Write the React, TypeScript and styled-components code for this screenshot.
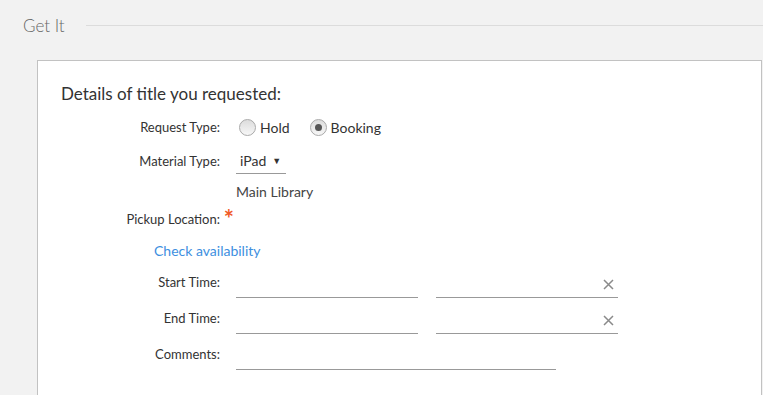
import styled, { createGlobalStyle } from "styled-components";

const GlobalStyle = createGlobalStyle`
  body {
    margin: 0;
    background: #f2f2f2;
    font-family: "Lato", "Open Sans", sans-serif;
    color: #333;
  }
`;

const ClearIcon = () => (
  <svg width="11" height="11" viewBox="0 0 11 11">
    <path d="M1 1 L10 10 M10 1 L1 10" stroke="#8a8a8a" strokeWidth="1.5" />
  </svg>
);

const App = () => {
  return (
    <Page>
      <GlobalStyle />
      <SectionHeader>
        <SectionTitle>Get It</SectionTitle>
        <Rule />
      </SectionHeader>
      <Card>
        <Heading>Details of title you requested:</Heading>
        <Row $height={24}>
          <Label>Request Type:</Label>
          <Value>
            <RadioOption>
              <Radio />
              Hold
            </RadioOption>
            <RadioOption>
              <Radio $checked />
              Booking
            </RadioOption>
          </Value>
        </Row>
        <Row $height={27} $gap={8}>
          <Label>Material Type:</Label>
          <Select>
            iPad <Caret>▼</Caret>
          </Select>
        </Row>
        <Row $height={18} $gap={8}>
          <span />
          <Plain>Main Library</Plain>
        </Row>
        <Row $height={18} $gap={10}>
          <Label>
            Pickup Location:<Required>*</Required>
          </Label>
          <span />
        </Row>
        <LinkRow>
          <Link href="#">Check availability</Link>
        </LinkRow>
        <Row $height={27} $gap={11}>
          <Label $lift>Start Time:</Label>
          <Value $gap={18}>
            <Input $width={182} />
            <Input $width={182}>
              <ClearIcon />
            </Input>
          </Value>
        </Row>
        <Row $height={27} $gap={9}>
          <Label $lift>End Time:</Label>
          <Value $gap={18}>
            <Input $width={182} />
            <Input $width={182}>
              <ClearIcon />
            </Input>
          </Value>
        </Row>
        <Row $height={27} $gap={9}>
          <Label $lift>Comments:</Label>
          <Value>
            <Input $width={320} />
          </Value>
        </Row>
      </Card>
    </Page>
  );
};

export default App;

const Page = styled.div`
  height: 395px;
  overflow: hidden;
`;

const SectionHeader = styled.div`
  display: flex;
  align-items: center;
  height: 50px;
  padding-left: 23px;
`;

const SectionTitle = styled.h2`
  margin: 0;
  font-size: 17px;
  font-weight: 300;
  color: #666;
`;

const Rule = styled.div`
  flex: 1;
  height: 1px;
  margin-left: 21px;
  background: #dcdcdc;
`;

const Card = styled.div`
  margin: 10px 0 0 37px;
  width: 677px;
  height: 400px;
  background: #fff;
  border: 1px solid #c2c2c2;
  padding: 23px 23px 0;
`;

const Heading = styled.h3`
  margin: 0;
  line-height: 20px;
  font-size: 17px;
  font-weight: 400;
  color: #333;
`;

const Row = styled.div<{ $height: number; $gap?: number }>`
  display: grid;
  grid-template-columns: 159px 1fr;
  column-gap: 16px;
  align-items: center;
  height: ${({ $height }) => $height}px;
  margin-top: ${({ $gap }) => $gap ?? 11}px;
  font-size: 13px;
`;

const Label = styled.label<{ $lift?: boolean }>`
  position: relative;
  text-align: right;
  color: #333;
  padding-bottom: ${({ $lift }) => ($lift ? 5 : 0)}px;
`;

const Required = styled.span`
  position: absolute;
  right: -14px;
  top: -4px;
  font-size: 24px;
  font-weight: 700;
  line-height: 24px;
  color: #f05a28;
`;

const Value = styled.div<{ $gap?: number }>`
  display: flex;
  align-items: center;
  gap: ${({ $gap }) => $gap ?? 17}px;
`;

const RadioOption = styled.span`
  display: flex;
  align-items: center;
  gap: 4px;
  font-size: 14px;
  color: #333;
  padding-left: 3px;
`;

const Radio = styled.span<{ $checked?: boolean }>`
  position: relative;
  width: 15px;
  height: 15px;
  border-radius: 50%;
  border: 1px solid #a9a9a9;
  background: linear-gradient(#dcdcdc, #f7f7f7);

  &::after {
    content: "";
    display: ${({ $checked }) => ($checked ? "block" : "none")};
    position: absolute;
    left: 4px;
    top: 4px;
    width: 7px;
    height: 7px;
    border-radius: 50%;
    background: #555;
  }
`;

const Select = styled.div`
  display: flex;
  align-items: center;
  width: 46px;
  height: 26px;
  padding-left: 4px;
  border-bottom: 1px solid #999;
  font-size: 14px;
  color: #333;
`;

const Caret = styled.span`
  font-size: 9px;
  margin-left: 6px;
`;

const Plain = styled.span`
  font-size: 14px;
  color: #444;
`;

const LinkRow = styled.div`
  margin-top: 13px;
  padding-left: 93px;
  line-height: 18px;
`;

const Link = styled.a`
  font-size: 14px;
  color: #3d8fe0;
  text-decoration: none;
`;

const Input = styled.div<{ $width: number }>`
  display: flex;
  align-items: center;
  justify-content: flex-end;
  width: ${({ $width }) => $width}px;
  height: 26px;
  padding-right: 4px;
  box-sizing: border-box;
  border-bottom: 1px solid #999;
`;
